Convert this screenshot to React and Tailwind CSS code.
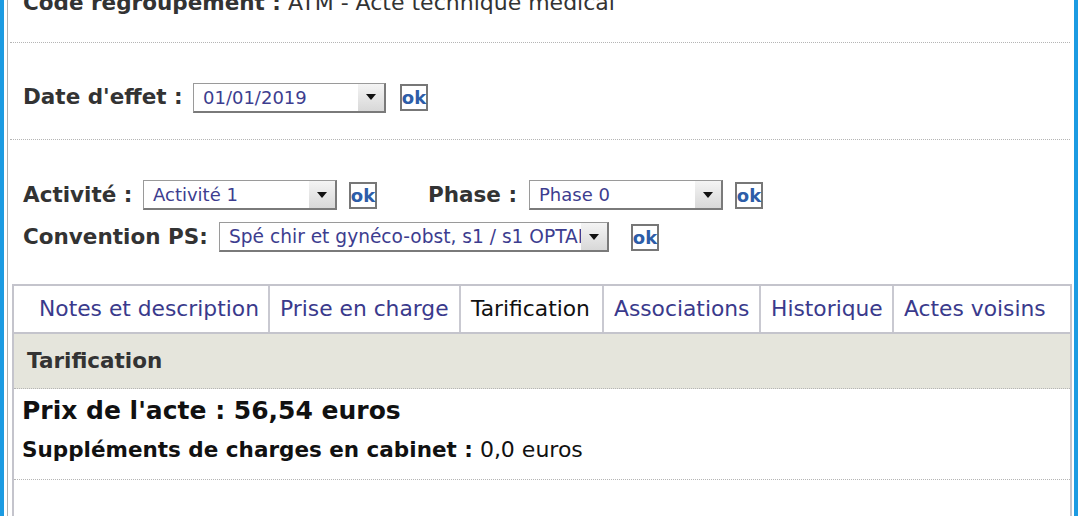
const FONT = { fontFamily: '"DejaVu Sans", Verdana, sans-serif' }

const TABS = [
  { label: 'Notes et description', width: 'w-[256px]', pad: 'pl-[25px]' },
  { label: 'Prise en charge', width: 'w-[191px]' },
  { label: 'Tarification', width: 'w-[143px]', active: true },
  { label: 'Associations', width: 'w-[157px]' },
  { label: 'Historique', width: 'w-[133px]' },
  { label: 'Actes voisins', width: 'flex-1' },
]

function FakeSelect({ value, width, textSize = 'text-[18px]' }) {
  return (
    <div
      className={`relative flex h-[30px] ${width} items-center border-t border-l border-[#9a9a9a] border-r-2 border-b-2 border-r-[#7a7a7a] border-b-[#7a7a7a] bg-white`}
    >
      <span className={`flex-1 overflow-hidden whitespace-nowrap pl-[9px] ${textSize} text-[#3d3d8f]`}>
        {value}
      </span>
      <span className="flex h-full w-[26px] items-center justify-center bg-gradient-to-b from-[#f4f4f4] to-[#d8d8d8]">
        <svg viewBox="0 0 10 6" className="h-[6px] w-[10px]">
          <path d="M0 0h10L5 6z" fill="#111" />
        </svg>
      </span>
    </div>
  )
}

function OkButton() {
  return (
    <span className="flex h-[27px] w-[28px] items-center justify-center border-2 border-[#777] bg-white text-[18px] font-bold text-[#2d5da8]">
      ok
    </span>
  )
}

export default function App() {
  return (
    <div className="flex h-[516px] w-[1078px] overflow-hidden bg-white" style={FONT}>
      <div className="w-[4px] bg-[#1c9be2]" />
      <div className="ml-[3px] flex flex-1 flex-col border-l border-[#b0b0b0]">
        <div className="mx-[2px] h-[43px] shrink-0 border-b border-dotted border-[#b5b5b5]">
          <p className="-mt-[10px] pl-[13px] text-[22px] leading-[26px] whitespace-nowrap text-[#333]">
            <span className="text-[21.5px] font-bold">Code regroupement :</span> ATM - Acte technique
            médical
          </p>
        </div>

        <div className="mx-[2px] flex h-[97px] shrink-0 items-center border-b border-dotted border-[#b5b5b5] pt-[13px] pl-[13px]">
          <span className="w-[170px] text-[21.5px] font-bold text-[#333]">Date d'effet :</span>
          <FakeSelect value="01/01/2019" width="w-[193px]" />
          <span className="ml-[14px]">
            <OkButton />
          </span>
        </div>

        <div className="flex shrink-0 flex-col gap-[12px] pt-[40px] pl-[15px]">
          <div className="flex h-[30px] items-center">
            <span className="w-[120px] text-[21.5px] font-bold text-[#333]">Activité :</span>
            <FakeSelect value="Activité 1" width="w-[194px]" />
            <span className="ml-[12px]">
              <OkButton />
            </span>
            <span className="ml-[51px] w-[101px] text-[21.5px] font-bold text-[#333]">Phase :</span>
            <FakeSelect value="Phase 0" width="w-[194px]" />
            <span className="ml-[12px]">
              <OkButton />
            </span>
          </div>
          <div className="flex h-[30px] items-center">
            <span className="w-[196px] text-[21.5px] font-bold whitespace-nowrap text-[#333]">
              Convention PS:
            </span>
            <FakeSelect
              value="Spé chir et gynéco-obst, s1 / s1 OPTAM"
              width="w-[390px]"
              textSize="text-[18.6px]"
            />
            <span className="ml-[22px]">
              <OkButton />
            </span>
          </div>
        </div>

        <div className="mt-[32px] ml-[4px] flex flex-1 flex-col border-t-2 border-l-2 border-r-2 border-[#c4c4cc]">
          <div className="flex h-[48px] shrink-0 border-b-2 border-[#c4c4cc]">
            {TABS.map((tab, i) => (
              <div
                key={tab.label}
                className={`flex items-center ${tab.width} ${tab.pad ?? 'pl-[10px]'} ${
                  i < TABS.length - 1 ? 'border-r-2 border-[#c9c9d1]' : ''
                } text-[21.8px] whitespace-nowrap ${tab.active ? 'text-[#111]' : 'text-[#3a3a8c]'}`}
              >
                {tab.label}
              </div>
            ))}
          </div>
          <div className="flex h-[55px] shrink-0 items-center border-b border-dotted border-[#b5b5b5] bg-[#e5e5dc] pl-[13px] text-[21.5px] font-bold text-[#333]">
            Tarification
          </div>
          <div className="flex h-[91px] shrink-0 flex-col border-b border-dotted border-[#b5b5b5] pt-[7px] pl-[8px] text-[#111]">
            <p className="text-[25px] font-bold leading-[30px]">Prix de l'acte : 56,54 euros</p>
            <p className="mt-[11px] text-[22px] leading-[26px]">
              <span className="text-[21.5px] font-bold">Suppléments de charges en cabinet :</span> 0,0
              euros
            </p>
          </div>
        </div>
      </div>
      <div className="ml-[2px] w-[4px] bg-[#1c9be2]" />
    </div>
  )
}
